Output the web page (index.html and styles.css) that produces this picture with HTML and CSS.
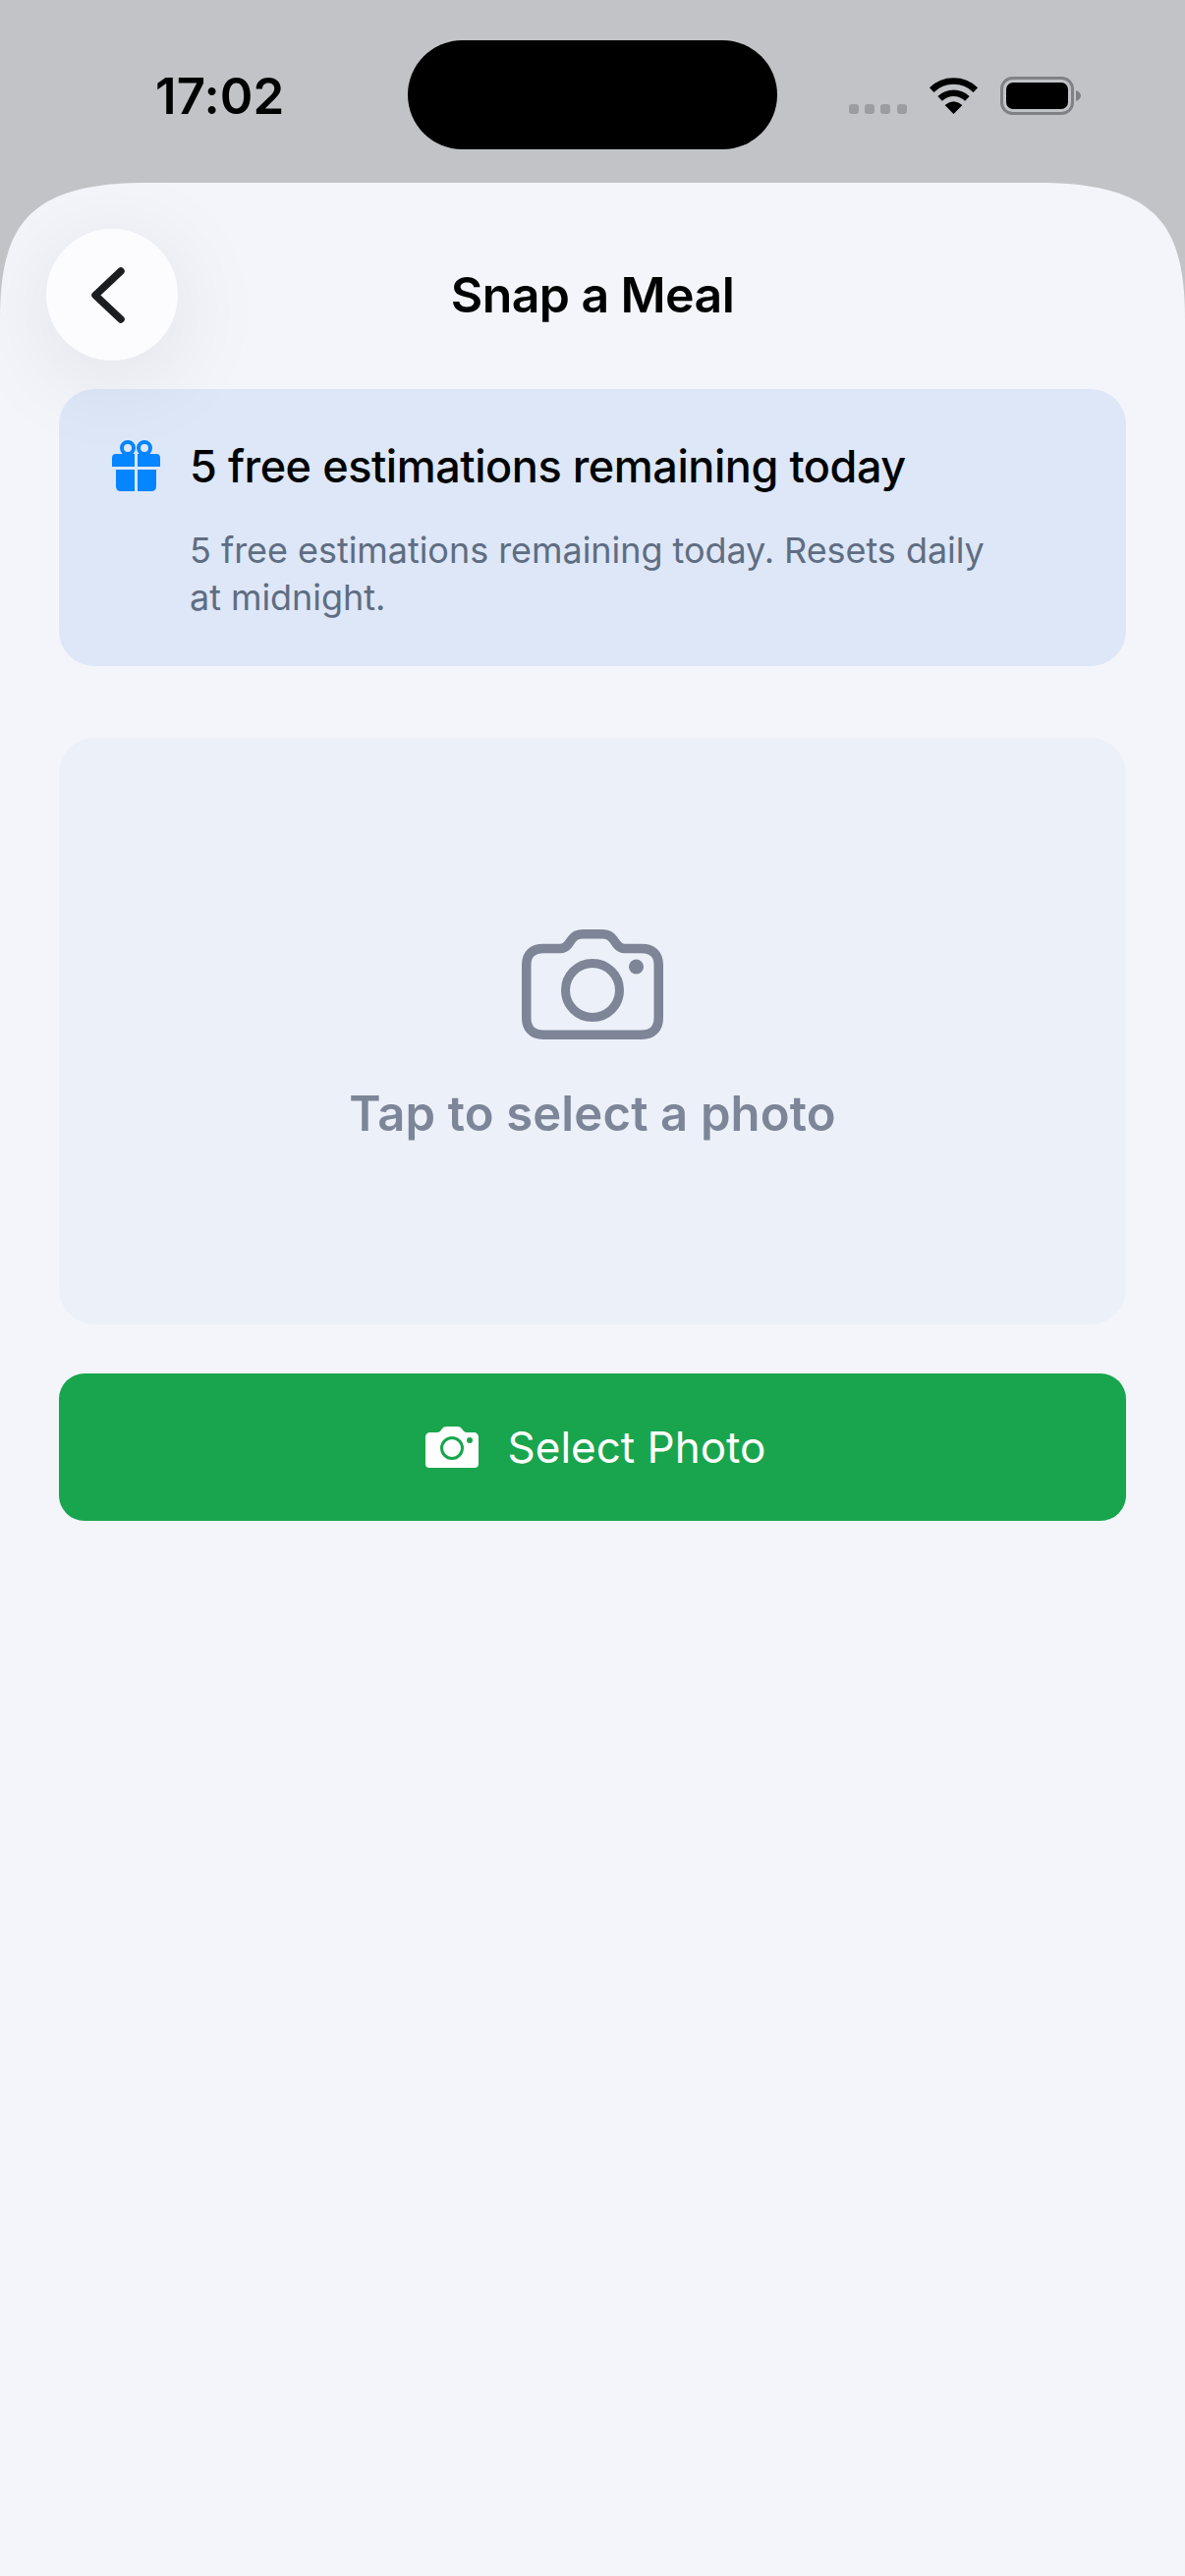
FILE: index.html
```html
<!DOCTYPE html>
<html lang="en">
<head>
  <meta charset="UTF-8" />
  <meta name="viewport" content="width=device-width, initial-scale=1" />
  <title>Snap a Meal</title>
  <link rel="stylesheet" href="styles.css">
</head>
<body>
  <div class="status-bar">
    <div class="status-time">17:02</div>
    <div class="island"></div>
    <div class="status-icons">
      <svg class="icon-signal" viewBox="0 0 59 10">
        <rect x="0" width="10" height="10" rx="3" />
        <rect x="16" width="10" height="10" rx="3" />
        <rect x="32" width="10" height="10" rx="3" />
        <rect x="49" width="10" height="10" rx="3" />
      </svg>
      <svg class="icon-wifi" viewBox="0 0 51 37">
        <path d="M3.2 12.6A32 32 0 0 1 47.8 12.6" fill="none" stroke="#000" stroke-width="6.5" />
        <path d="M11.6 21.4A20 20 0 0 1 39.4 21.4" fill="none" stroke="#000" stroke-width="6.5" />
        <path d="M25.5 37L16.6 28Q25.5 20.6 34.4 28Z" fill="#000" />
      </svg>
      <svg class="icon-battery" viewBox="0 0 82 39">
        <rect x="1.5" y="1.5" width="72" height="36" rx="11" fill="none" stroke="#808184" stroke-width="3" />
        <rect x="6" y="6" width="63" height="27" rx="7" fill="#000" />
        <path d="M77 14C80 15 82 17 82 19.5C82 22 80 24 77 25Z" fill="#808184" />
      </svg>
    </div>
  </div>

  <main class="sheet">
    <header class="nav">
      <button class="back-btn" aria-label="Back">
        <svg class="icon-back" viewBox="0 0 34 57">
          <path d="M30 4L4 28.5L30 53" fill="none" stroke="#1b1d21" stroke-width="7.5" stroke-linecap="round" stroke-linejoin="round" />
        </svg>
      </button>
      <h1 class="nav-title">Snap a Meal</h1>
    </header>

    <section class="quota-card">
      <svg class="icon-gift" viewBox="0 0 49 52">
        <circle cx="16" cy="8" r="6" fill="none" stroke="#0585ff" stroke-width="4" />
        <circle cx="33" cy="8" r="6" fill="none" stroke="#0585ff" stroke-width="4" />
        <path d="M4 14H23V27H0V18Q0 14 4 14ZM26 14H45Q49 14 49 18V27H26ZM4 30H23V52H9Q4 52 4 47ZM26 30H45V47Q45 52 40 52H26Z" fill="#0585ff" />
      </svg>
      <div class="quota-text">
        <div class="quota-title">5 free estimations remaining today</div>
        <p class="quota-sub">5 free estimations remaining today. Resets daily at midnight.</p>
      </div>
    </section>

    <section class="photo-box">
      <svg class="icon-camera" viewBox="0 0 144 112">
        <path d="M22 19.5H39C43 19.5 45 18 47 15.5L51 10C54 6 57 4.75 62 4.75H82C87 4.75 90 6 93 10L97 15.5C99 18 101 19.5 105 19.5H122C133 19.5 139.25 25 139.25 36V90C139.25 101 133 107.25 122 107.25H22C11 107.25 4.75 101 4.75 90V36C4.75 25 11 19.5 22 19.5Z" fill="none" stroke="#7d8597" stroke-width="9.5" />
        <circle cx="72" cy="62" r="27.5" fill="none" stroke="#7d8597" stroke-width="9" />
        <circle cx="116.5" cy="38" r="7.5" fill="#7d8597" />
      </svg>
      <div class="photo-label">Tap to select a photo</div>
    </section>

    <button class="select-btn">
      <svg class="icon-camera-small" viewBox="0 0 54 42">
        <path d="M5 6H12C14 6 15 5 16 3.5C17.5 1 19 0 22 0H32C35 0 36.5 1 38 3.5C39 5 40 6 42 6H49C52 6 54 8 54 11V38C54 40.5 52.5 42 50 42H4C1.5 42 0 40.5 0 38V11C0 8 2 6 5 6Z" fill="#fff" />
        <circle cx="27" cy="22" r="10.5" fill="none" stroke="#19a54d" stroke-width="3" />
        <circle cx="45" cy="14" r="3" fill="#19a54d" />
      </svg>
      <span>Select Photo</span>
    </button>
  </main>
</body>
</html>
```

FILE: styles.css
```css
* {
  box-sizing: border-box;
}
html, body {
  height: 100%;
}
body {
  margin: 0;
  display: flex;
  flex-direction: column;
  font-family: Inter, "Noto Sans", sans-serif;
  background: #c2c3c7;
  color: #000;
  overflow: hidden;
}

/* status bar */
.status-bar {
  display: flex;
  height: 186px;
  padding: 41px 0 0 158px;
  flex-shrink: 0;
}
.status-time {
  width: 257px;
  margin-top: 27px;
  font-size: 51px;
  line-height: 60px;
  font-weight: 600;
  letter-spacing: 0.1px;
}
.island {
  width: 376px;
  height: 111px;
  background: #000;
  border-radius: 56px;
}
.status-icons {
  display: flex;
  align-items: flex-start;
  margin-left: 73px;
  margin-top: 37px;
}
.icon-signal {
  width: 59px;
  height: 10px;
  margin-top: 28px;
  fill: #9c9da0;
}
.icon-wifi {
  width: 51px;
  height: 37px;
  margin-left: 22px;
  margin-top: 1px;
}
.icon-battery {
  width: 82px;
  height: 39px;
  margin-left: 22px;
}

/* sheet */
.sheet {
  flex: 1;
  position: relative;
  background: #f3f5fa;
  clip-path: path("M0 139C0 42 30 0 150 0H1056C1176 0 1206 42 1206 139V2436H0Z");
  padding: 0 60px;
}
.nav {
  display: flex;
  justify-content: center;
  align-items: center;
  height: 210px;
}
.back-btn {
  position: absolute;
  top: 47px;
  left: 47px;
  z-index: 2;
  display: flex;
  align-items: center;
  justify-content: center;
  width: 134px;
  height: 134px;
  padding: 0 8px 0 0;
  border: none;
  border-radius: 50%;
  background: #fcfcfe;
  box-shadow: 0 16px 100px rgba(0,0,0,0.09);
}
.icon-back {
  width: 34px;
  height: 57px;
}
.nav-title {
  margin: 0 0 -18px;
  font-size: 50px;
  line-height: 60px;
  font-weight: 600;
  letter-spacing: -0.6px;
}

/* free estimations banner */
.quota-card {
  display: flex;
  align-items: flex-start;
  height: 282px;
  padding: 52px 54px 0 54px;
  background: #dde7f7;
  border-radius: 36px;
}
.icon-gift {
  width: 49px;
  height: 52px;
  flex-shrink: 0;
}
.quota-text {
  margin-left: 30px;
}
.quota-title {
  font-size: 45px;
  line-height: 54px;
  font-weight: 500;
  letter-spacing: -0.45px;
}
.quota-sub {
  margin: 34px 0 0;
  font-size: 36px;
  line-height: 48px;
  letter-spacing: -0.05px;
  color: #5f6d82;
  max-width: 830px;
}

/* photo placeholder */
.photo-box {
  display: flex;
  flex-direction: column;
  align-items: center;
  height: 597px;
  margin-top: 73px;
  padding-top: 195px;
  background: #ecf0f8;
  border-radius: 36px;
}
.icon-camera {
  width: 144px;
  height: 112px;
}
.photo-label {
  margin-top: 46px;
  font-size: 49px;
  line-height: 60px;
  font-weight: 600;
  letter-spacing: 0.15px;
  color: #7d8698;
}

/* green button */
.select-btn {
  display: flex;
  align-items: center;
  justify-content: center;
  gap: 30px;
  width: 100%;
  height: 150px;
  margin-top: 50px;
  padding: 0 0 0 6px;
  border: none;
  border-radius: 26px;
  background: #19a54d;
  color: #fff;
  font-family: inherit;
  font-size: 44px;
  font-weight: 400;
}
.icon-camera-small {
  width: 54px;
  height: 42px;
}
```
